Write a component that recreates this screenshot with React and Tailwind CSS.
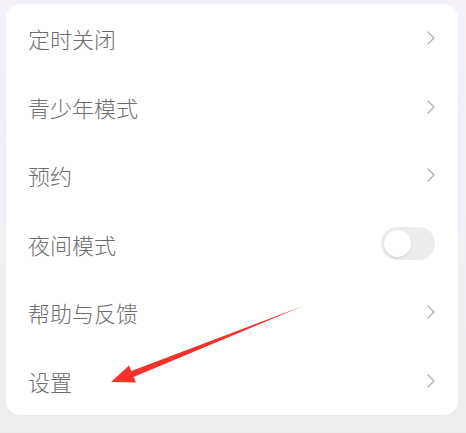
import React from "react";

const Chevron = () => (
  <svg width="10" height="16" viewBox="0 0 10 16" fill="none">
    <path d="M2 2l6 6-6 6" stroke="#b3b3b3" strokeWidth="1.4" strokeLinecap="round" strokeLinejoin="round" />
  </svg>
);

const Toggle = () => (
  <div className="w-[54px] h-[33px] rounded-full bg-[#ececec] flex items-center px-[3px]">
    <div className="w-[27px] h-[27px] rounded-full bg-white shadow-[0_1px_2px_rgba(0,0,0,0.12)]" />
  </div>
);

const items = [
  { label: "定时关闭", type: "chev" },
  { label: "青少年模式", type: "chev" },
  { label: "预约", type: "chev" },
  { label: "夜间模式", type: "toggle" },
  { label: "帮助与反馈", type: "chev" },
  { label: "设置", type: "chev" },
];

export default function App() {
  return (
    <div
      className="relative w-[466px] h-[433px] overflow-hidden bg-gradient-to-b from-[#f5f0f7] via-[#f2eff6] to-[#ededed] pl-[6px] pt-[4px]"
      style={{ fontFamily: '"Noto Sans CJK SC", "Noto Sans", sans-serif' }}
    >
      <div className="w-[452px] h-[411px] bg-white rounded-[14px] flex flex-col">
        {items.map((it) => (
          <div key={it.label} className="h-[69px] flex items-center justify-between pl-[22px]">
            <span className="text-[22px] text-[#6e6e6e] font-light leading-none">{it.label}</span>
            {it.type === "chev" ? (
              <div className="pr-[22px] flex items-center">
                <Chevron />
              </div>
            ) : (
              <div className="pr-[23px]">
                <Toggle />
              </div>
            )}
          </div>
        ))}
      </div>
      <svg className="absolute left-0 top-0" width="466" height="433" viewBox="0 0 466 433">
        <polygon
          points="111,382 129,365.5 131.3,371.1 303,306 133.5,377 136,382.5"
          fill="#f0332b"
        />
      </svg>
    </div>
  );
}
